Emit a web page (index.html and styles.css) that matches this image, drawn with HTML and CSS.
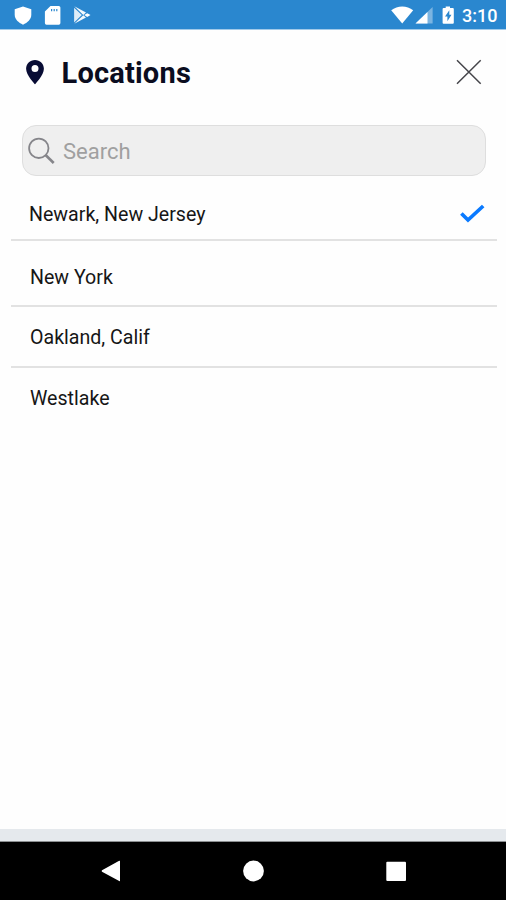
FILE: index.html
```html
<!DOCTYPE html>
<html lang="en">
<head>
<meta charset="utf-8">
<title>Locations</title>
<link rel="stylesheet" href="styles.css">
</head>
<body>
<div class="screen">
  <div class="status">
    <svg class="status-left" width="80" height="22" viewBox="14 4 80 22" fill="#fff">
      <path d="M23 6.500l8.300 2.800v5.500c0 4.500-3.800 8-8.300 9.900c-4.500-1.900-8.300-5.400-8.300-9.900V9.300z"/>
      <path fill-rule="evenodd" d="M50.500 6h8.300q1.600 0 1.600 1.600v15.500q0 1.600-1.600 1.600H46.500q-1.600 0-1.600-1.600V11.600zM51 8.900v2.400h1.200v-2.400zM53.600 8.900v2.400h1.200v-2.400zM56.200 8.900v2.400h1.200v-2.400z"/>
      <path d="M74.300 6.300L86 12.600L83.300 14.900z" opacity=".95"/>
      <path d="M74.300 23.800L86 17.600L83.300 15.300z" opacity=".95"/>
      <path d="M74.100 7.700L81.800 15.100L74.100 22.500z" opacity=".85"/>
      <path d="M84.300 15.100L87.200 13.200L90.500 15.100L87.200 17z"/>
    </svg>
    <div class="status-right">
      <svg width="66" height="22" viewBox="390 4 66 22" fill="#fff">
        <path d="M391.200 10.300C397.500 5.200 407 5.200 413.200 10.300L402.200 23.600z"/>
        <path d="M432.600 7v16.500H415.500z" opacity=".38"/>
        <path d="M427.500 12v11.500H415.500z"/>
        <path fill-rule="evenodd" d="M445.700 6.400h4.300v1.600h2.800q1 0 1 1v13.700q0 1-1 1h-9.200q-1 0-1-1V9q0-1 1-1h2.100zM449.300 10.300L445 16.500h2.400v4.700L451.500 14.800h-2.200z"/>
      </svg>
      <span class="clock">3:10</span>
    </div>
  </div>
  <header class="header">
    <svg width="20" height="26" viewBox="25 59 20 26"><path fill="#080c34" fill-rule="evenodd" d="M35 60c-5 0-8.900 3.700-8.900 8.700C26.100 75.100 35 84.300 35 84.300s8.900-9.200 8.900-15.600C43.900 63.700 40 60 35 60zM35 65a3.500 3.500 0 1 1 0 7a3.500 3.500 0 0 1 0-7z"/></svg>
    <h1 class="title">Locations</h1>
    <svg class="close" width="26" height="26" viewBox="456 59 26 26"><path d="M457 60.300L480.700 83.700M480.700 60.300L457 83.700" fill="none" stroke="#45454a" stroke-width="1.500"/></svg>
  </header>
  <div class="search">
    <svg width="28" height="28" viewBox="27 137 28 28" fill="none" stroke="#85858a"><circle cx="38.800" cy="148.300" r="9.700" stroke-width="1.800"/><path d="M45.800 155.300L53.700 163" stroke-width="2.600"/></svg>
    <span class="placeholder">Search</span>
  </div>
  <ul class="list">
    <li class="row row-selected"><span class="name">Newark, New Jersey</span>
      <svg width="26" height="20" viewBox="459 204 26 20"><path d="M461.400 213.500L468 220L483.200 206" fill="none" stroke="#0a7aff" stroke-width="3.700"/></svg></li>
    <li class="row row-tall"><span class="name">New York</span></li>
    <li class="row"><span class="name">Oakland, Calif</span></li>
    <li class="row row-last"><span class="name">Westlake</span></li>
  </ul>
  <div class="strip"></div>
  <nav class="nav">
    <svg width="506" height="58" viewBox="0 842 506 58" fill="#fff">
      <path d="M102 870.200L119.200 860.800Q120 860.500 120 861.300V880.700Q120 881.500 119.200 881L102 871.800Q101.300 871 102 870.200z"/>
      <circle cx="253.500" cy="871" r="10.400"/>
      <rect x="386.300" y="861.700" width="19.700" height="19.300" rx="1"/>
    </svg>
  </nav>
</div>
</body>
</html>
```

FILE: styles.css
```css
* { box-sizing: border-box; }
body { margin: 0; background: #fff; font-family: Roboto, "Liberation Sans", sans-serif; }
svg { display: block; flex: none; }
.screen { width: 506px; height: 900px; display: flex; flex-direction: column; overflow: hidden; background: #fefefe; }
.status { height: 30px; flex: none; display: flex; justify-content: space-between; align-items: flex-start; padding: 4px 8px 0 14px; background: #2a87cf; border-bottom: 1px solid #a2cae9; }
.status-right { display: flex; gap: 6px; }
.clock { width: 36px; font-size: 18px; font-weight: 500; line-height: 24px; color: #fff; white-space: nowrap; }
.header { height: 95px; flex: none; display: flex; align-items: flex-start; padding: 29px 24px 0 25px; }
.title { margin: -2px 0 0 16.500px; font-size: 29px; font-weight: 700; line-height: 32px; letter-spacing: 0.2px; color: #0b0d20; white-space: nowrap; }
.close { margin-left: auto; }
.search { height: 51px; flex: none; margin: 0 20px 0 22px; display: flex; align-items: center; padding: 1px 0 0 4px; background: #efefef; border: 1px solid #dedede; border-radius: 14px; }
.placeholder { margin-left: 8px; padding-top: 1px; font-size: 22px; line-height: 30px; color: #a0a0a0; white-space: nowrap; }
.list { list-style: none; margin: 0 9px 0 11px; padding: 0; }
.row { height: 61px; display: flex; align-items: center; justify-content: space-between; padding: 0 12px 0 19px; border-bottom: 2px solid #e2e2e2; }
.row-selected { height: 65px; padding: 13px 12px 0 18px; }
.row-tall { height: 66px; padding-top: 8px; }
.row-last { height: 59px; border-bottom: 0; }
.name { padding-top: 2px; font-size: 19.6px; line-height: 26px; color: #161616; white-space: nowrap; }
.strip { height: 13px; flex: none; margin-top: auto; background: #e5e9ed; border-bottom: 1px solid #8c8f91; }
.nav { height: 58px; flex: none; background: #000; }
```
